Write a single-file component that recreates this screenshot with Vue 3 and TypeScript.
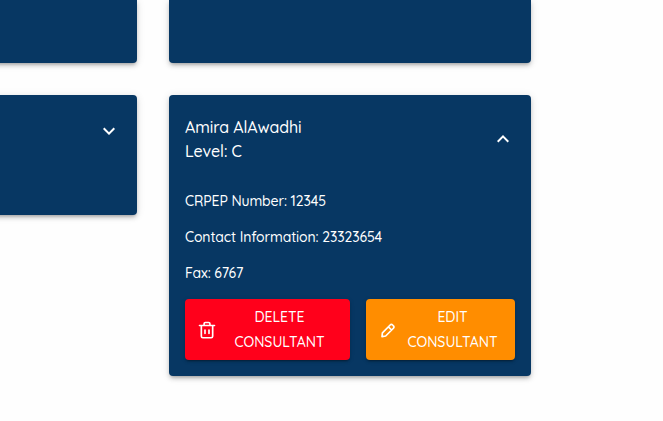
<script setup lang="ts">
interface Consultant {
  name: string
  level: string
  details: { label: string; value: string }[]
}

const consultant: Consultant = {
  name: 'Amira AlAwadhi',
  level: 'C',
  details: [
    { label: 'CRPEP Number', value: '12345' },
    { label: 'Contact Information', value: '23323654' },
    { label: 'Fax', value: '6767' },
  ],
}
</script>

<template>
  <main class="page">
    <div class="grid">
      <section class="card above"></section>
      <section class="card above"></section>

      <section class="card collapsed">
        <svg class="chevron" viewBox="0 0 24 24"><path d="M16.59 8.59 12 13.17 7.41 8.59 6 10l6 6 6-6z" /></svg>
      </section>

      <section class="card expanded">
        <header class="header">
          <div class="title">
            <div>{{ consultant.name }}</div>
            <div>Level: {{ consultant.level }}</div>
          </div>
          <svg class="chevron" viewBox="0 0 24 24"><path d="m12 8-6 6 1.41 1.41L12 10.83l4.59 4.58L18 14z" /></svg>
        </header>
        <div class="details">
          <p v-for="d in consultant.details" :key="d.label">{{ d.label }}: {{ d.value }}</p>
        </div>
        <div class="actions">
          <button class="btn delete" type="button">
            <svg class="icon" viewBox="0 0 24 24">
              <path d="M3 6.6h18M8.5 6.3V4.5c0-.9.6-1.5 1.5-1.5h4c.9 0 1.5.6 1.5 1.5v1.8M5.2 6.6v12.9c0 1.1.7 1.8 1.8 1.8h10c1.1 0 1.8-.7 1.8-1.8V6.6M9.6 12v4.2M14.4 12v4.2" />
            </svg>
            <span class="label"><span>DELETE</span><span>CONSULTANT</span></span>
          </button>
          <button class="btn edit" type="button">
            <svg class="icon" viewBox="0 0 24 24">
              <path d="m5.3 15.4 9.3-9.4c.9-.9 2-.9 2.9 0l1 1c.9.9.9 2 0 2.9l-9.3 9.3-4.4.8zM12.5 8.2l3.8 3.8" />
            </svg>
            <span class="label"><span>EDIT</span><span>CONSULTANT</span></span>
          </button>
        </div>
      </section>
    </div>
  </main>
</template>

<style>
body {
  margin: 0;
  background: #fefefe;
}
</style>

<style scoped>
.page {
  display: flex;
  justify-content: flex-end;
  box-sizing: border-box;
  width: 663px;
  height: 421px;
  padding-right: 132px;
  overflow: hidden;
  font-family: Quicksand, Lato, sans-serif;
  font-weight: 500;
  color: #fff;
}
.grid {
  display: grid;
  flex: none;
  grid-template-columns: 362px 362px;
  grid-template-rows: 63px 281px;
  gap: 32px;
  align-items: start;
}
.card {
  box-sizing: border-box;
  border-radius: 4px;
  background: #073763;
  box-shadow: 0 3px 3px -2px rgba(0, 0, 0, 0.2), 0 3px 4px rgba(0, 0, 0, 0.14), 0 1px 8px rgba(0, 0, 0, 0.12);
}
.above {
  height: 63px;
  border-radius: 0 0 4px 4px;
}
.collapsed {
  display: flex;
  justify-content: flex-end;
  height: 120px;
  padding: 24px 16px;
}
.expanded {
  height: 281px;
  padding: 20px 16px 16px;
}
.chevron {
  width: 24px;
  height: 24px;
  fill: #fff;
}
.header {
  display: flex;
  justify-content: space-between;
  align-items: center;
  height: 48px;
}
.title {
  font-size: 16px;
  line-height: 24px;
  letter-spacing: -0.1px;
}
.details {
  padding-top: 20px;
}
.details p {
  margin: 0;
  height: 36px;
  font-size: 14px;
  line-height: 36px;
  letter-spacing: -0.12px;
  white-space: nowrap;
}
.actions {
  display: flex;
  gap: 16px;
  padding-top: 8px;
}
.btn {
  display: flex;
  align-items: center;
  box-sizing: border-box;
  height: 61px;
  padding: 6px 16px 6px 12px;
  border: 0;
  border-radius: 4px;
  color: #fff;
  font: 500 14px/24.5px Quicksand, Lato, sans-serif;
  box-shadow: 0 3px 1px -2px rgba(0, 0, 0, 0.2), 0 2px 2px rgba(0, 0, 0, 0.14), 0 1px 5px rgba(0, 0, 0, 0.12);
}
.delete {
  width: 165px;
  background: #ff001b;
}
.edit {
  width: 149px;
  background: #ff8d00;
}
.icon {
  flex: none;
  width: 20px;
  height: 20px;
  margin-right: 8px;
  fill: none;
  stroke: #fff;
  stroke-width: 2;
  stroke-linecap: round;
  stroke-linejoin: round;
}
.label {
  display: flex;
  flex: 1;
  flex-direction: column;
  align-items: center;
}
</style>
